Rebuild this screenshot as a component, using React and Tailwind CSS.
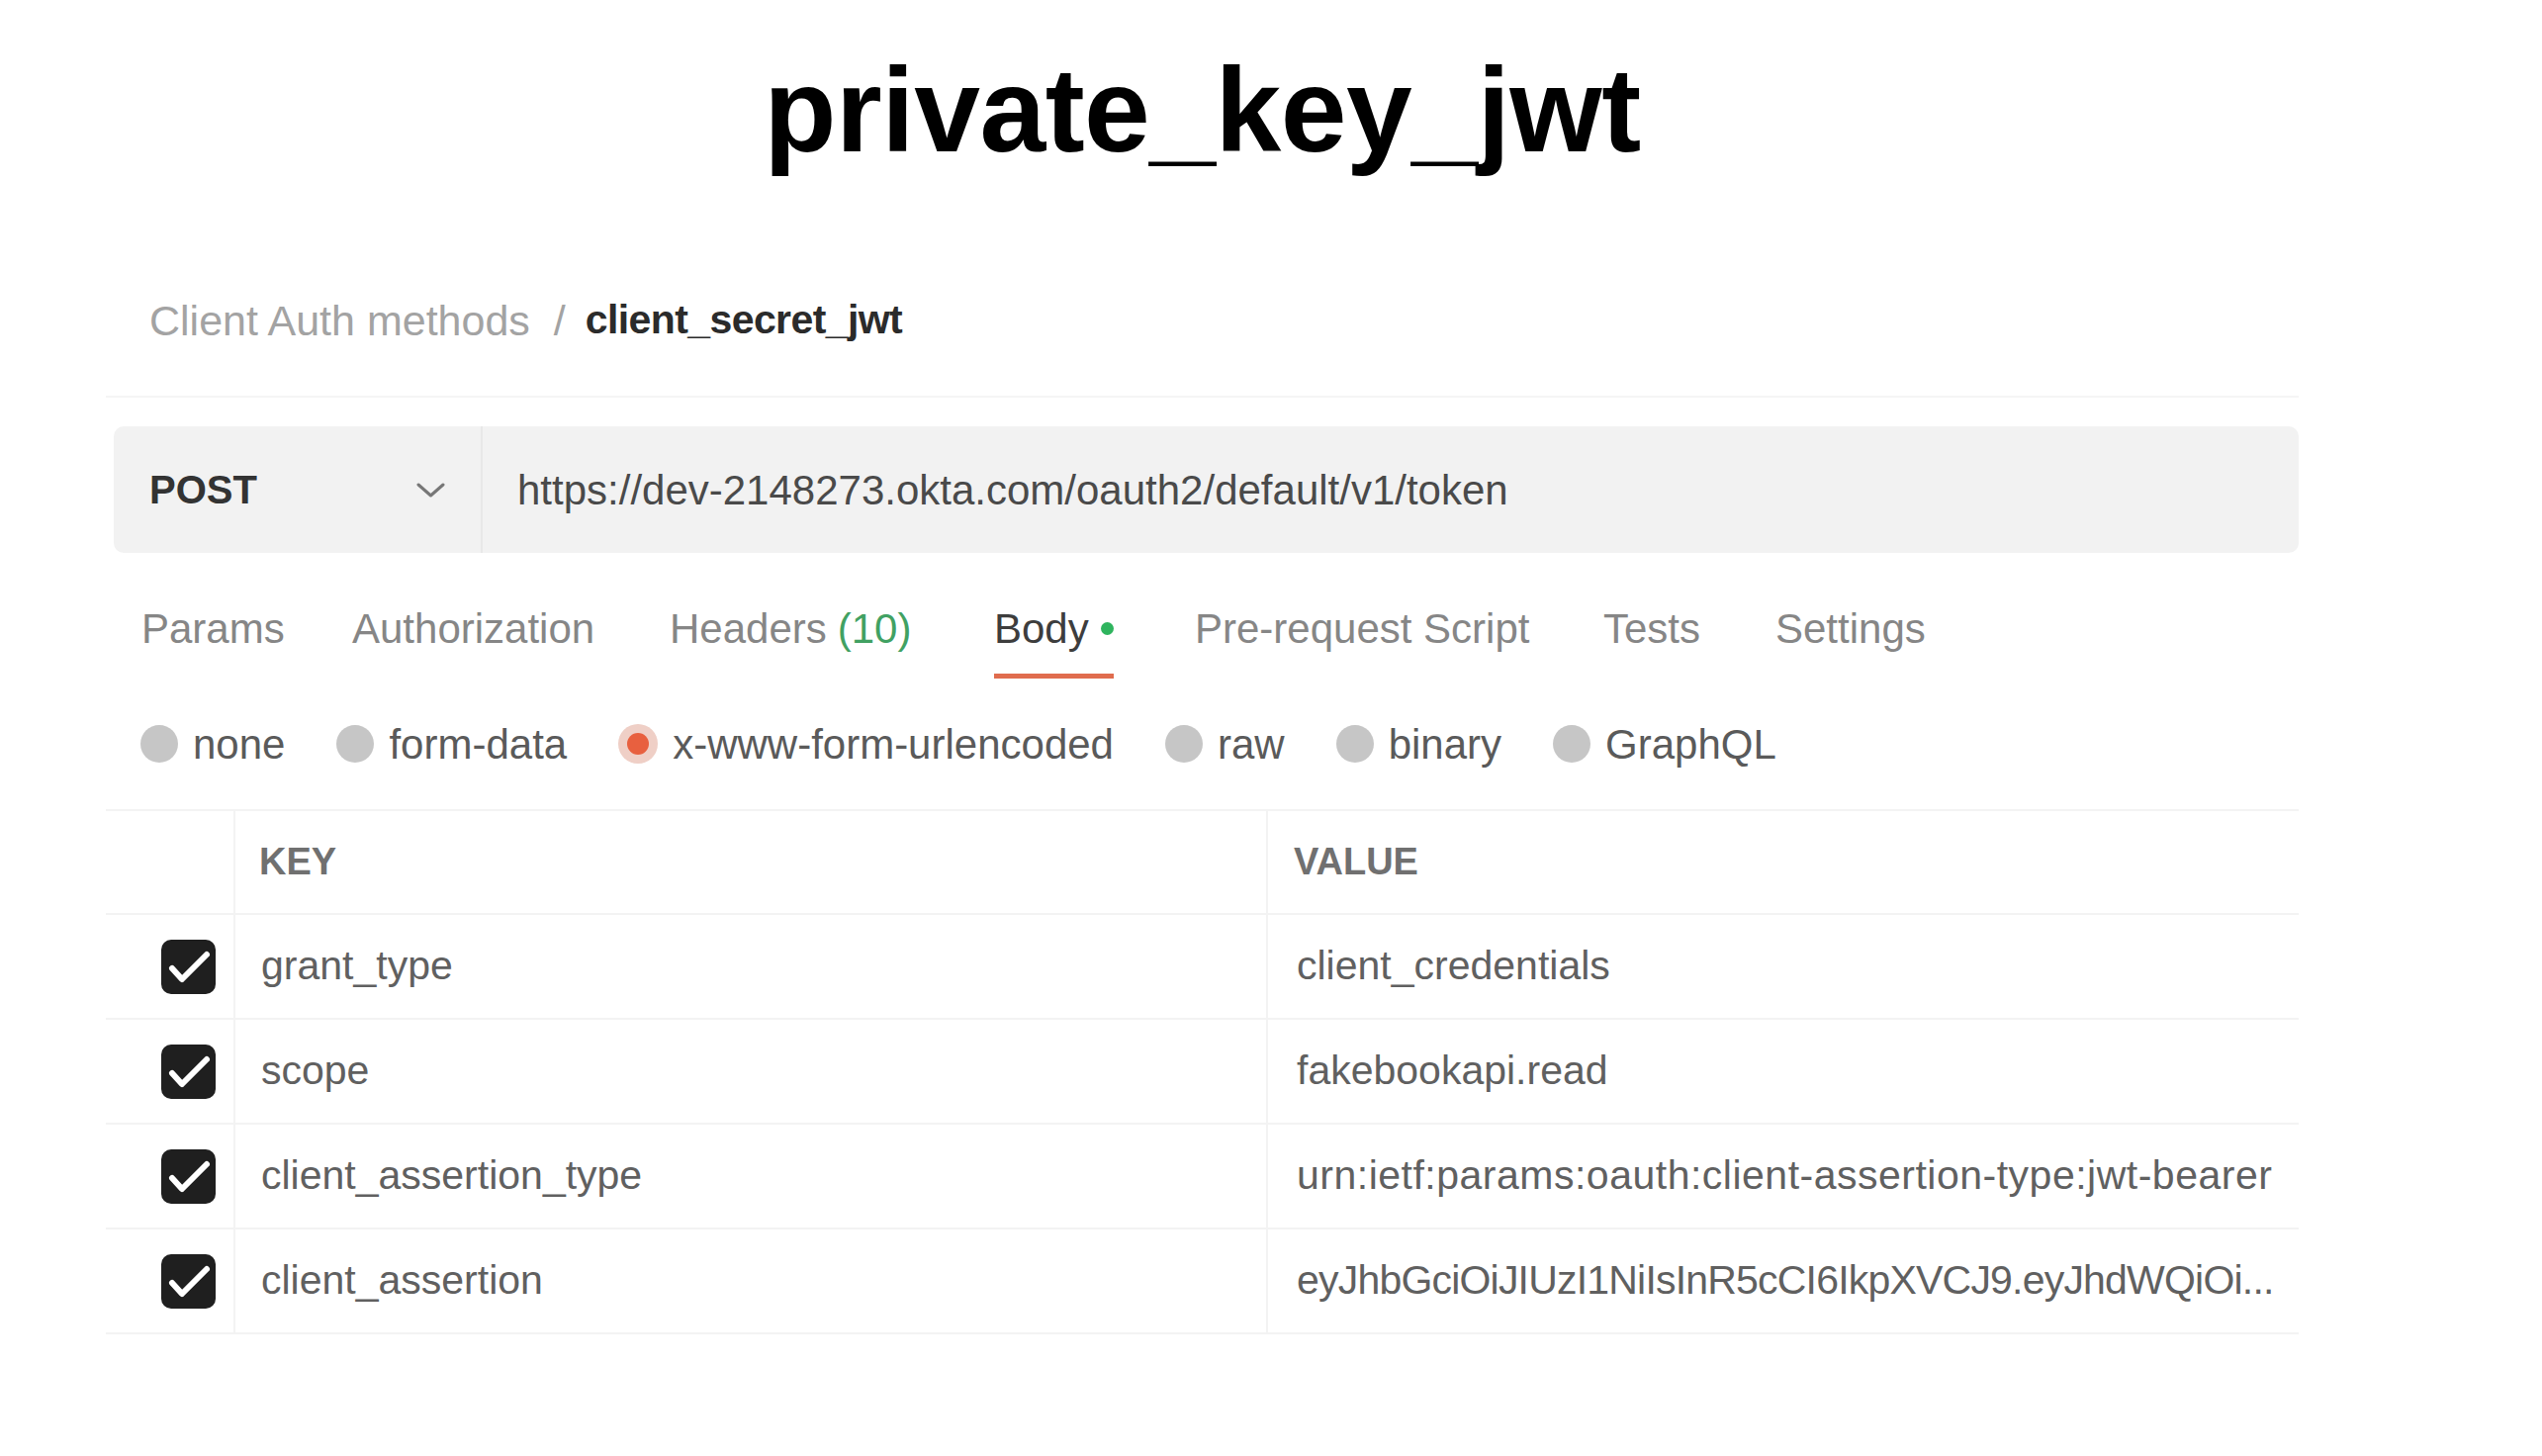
import { Fragment } from "react";

const tabs = [
  { label: "Params", w: "w-[213px]" },
  { label: "Authorization", w: "w-[321px]" },
  { label: "Headers", count: "(10)", w: "w-[328px]" },
  { label: "Body", active: true, w: "w-[203px]" },
  { label: "Pre-request Script", w: "w-[413px]" },
  { label: "Tests", w: "w-[174px]" },
  { label: "Settings", w: "" },
];

const bodyTypes = [
  { label: "none" },
  { label: "form-data" },
  { label: "x-www-form-urlencoded", selected: true },
  { label: "raw" },
  { label: "binary" },
  { label: "GraphQL" },
];

const rows = [
  { key: "grant_type", value: "client_credentials", track: "" },
  { key: "scope", value: "fakebookapi.read", track: "" },
  { key: "client_assertion_type", value: "urn:ietf:params:oauth:client-assertion-type:jwt-bearer", track: "tracking-[0.5px]" },
  { key: "client_assertion", value: "eyJhbGciOiJIUzI1NiIsInR5cCI6IkpXVCJ9.eyJhdWQiOi...", track: "tracking-[-0.8px]" },
];

const CheckBox = () => (
  <div className="w-[55px] h-[55px] rounded-[10px] bg-[#1f1f1f] flex items-center justify-center">
    <svg width="55" height="55" viewBox="0 0 55 55">
      <polyline points="11,29 21,40 46,15" fill="none" stroke="white" strokeWidth="6" strokeLinecap="round" strokeLinejoin="round" />
    </svg>
  </div>
);

const Radio = ({ selected }) =>
  selected ? (
    <div className="w-[40px] h-[40px] rounded-full bg-[#efcfc6] flex items-center justify-center">
      <div className="w-[22px] h-[22px] rounded-full bg-[#e8603f]"></div>
    </div>
  ) : (
    <div className="w-[38px] h-[38px] rounded-full bg-[#c6c6c6]"></div>
  );

export default function App() {
  return (
    <div className="min-h-screen bg-white font-['Liberation_Sans',Arial,sans-serif]">
      <div className="ml-[107px] w-[2217px]">

        {/* title */}
        <div className="pt-[51px] text-center text-[120px] font-bold leading-none tracking-[-0.5px] text-black">
          private_key_jwt
        </div>

        {/* breadcrumb */}
        <div className="mt-[77px] h-[154px] flex items-center pl-[44px] border-b-2 border-[#f5f5f5]">
          <span className="text-[43px] text-[#a3a3a3]">Client Auth methods</span>
          <span className="ml-[24px] text-[43px] text-[#a3a3a3]">/</span>
          <span className="ml-[20px] text-[41px] tracking-[-0.6px] text-[#2b2b2b] font-semibold">client_secret_jwt</span>
        </div>

        {/* url bar */}
        <div className="mt-[29px] ml-[8px] h-[128px] flex bg-[#f2f2f2] rounded-[10px]">
          <div className="w-[373px] flex items-center justify-between pl-[36px] pr-[36px] border-r-2 border-[#e8e8e8]">
            <span className="text-[40px] font-bold text-[#333333]">POST</span>
            <svg width="29" height="15" viewBox="0 0 29 15">
              <polyline points="2,2 14.5,13 27,2" fill="none" stroke="#777777" strokeWidth="3" strokeLinecap="round" strokeLinejoin="round" />
            </svg>
          </div>
          <div className="flex items-center pl-[35px] text-[42px] text-[#4a4a4a]">
            https://dev-2148273.okta.com/oauth2/default/v1/token
          </div>
        </div>

        {/* tabs */}
        <div className="mt-[31px] flex pl-[36px] text-[42px]">
          {tabs.map((t) => (
            <div key={t.label} className={"shrink-0 flex " + t.w}>
              <div
                className={
                  t.active
                    ? "h-[96px] flex items-center border-b-[5px] border-[#e06c4e] text-[#3d3d3d]"
                    : "h-[96px] flex items-center border-b-[5px] border-transparent text-[#868686]"
                }
              >
                <span>{t.label}</span>
                {t.count && <span className="ml-[11px] text-[#41a162]">{t.count}</span>}
                {t.active && <span className="ml-[12px] w-[13px] h-[13px] rounded-full bg-[#2fb45e]"></span>}
              </div>
            </div>
          ))}
        </div>

        {/* body types */}
        <div className="mt-[14px] h-[104px] flex items-center gap-[52px] pl-[35px] text-[42px] text-[#5a5a5a]">
          {bodyTypes.map((b) => (
            <div key={b.label} className="flex items-center gap-[15px]">
              <Radio selected={b.selected} />
              <span>{b.label}</span>
            </div>
          ))}
        </div>

        {/* table */}
        <div className="mt-[14px] border-t-2 border-[#f3f3f3] text-[41px]">
          <div className="grid grid-cols-[131px_1044px_1fr] h-[105px] border-b-2 border-[#f3f3f3]">
            <div className="border-r-2 border-[#f3f3f3]"></div>
            <div className="border-r-2 border-[#f3f3f3] flex items-center pl-[24px] text-[38px] font-semibold text-[#707070]">KEY</div>
            <div className="flex items-center pl-[26px] text-[38px] font-semibold text-[#707070]">VALUE</div>
          </div>
          {rows.map((r) => (
            <Fragment key={r.key}>
              <div className="grid grid-cols-[131px_1044px_1fr] h-[106px] border-b-2 border-[#f3f3f3]">
                <div className="border-r-2 border-[#f3f3f3] flex items-center pl-[56px]">
                  <CheckBox />
                </div>
                <div className="border-r-2 border-[#f3f3f3] flex items-center pl-[26px] text-[#606060]">{r.key}</div>
                <div className={"flex items-center pl-[29px] text-[#606060] whitespace-nowrap " + r.track}>{r.value}</div>
              </div>
            </Fragment>
          ))}
        </div>

      </div>
    </div>
  );
}
